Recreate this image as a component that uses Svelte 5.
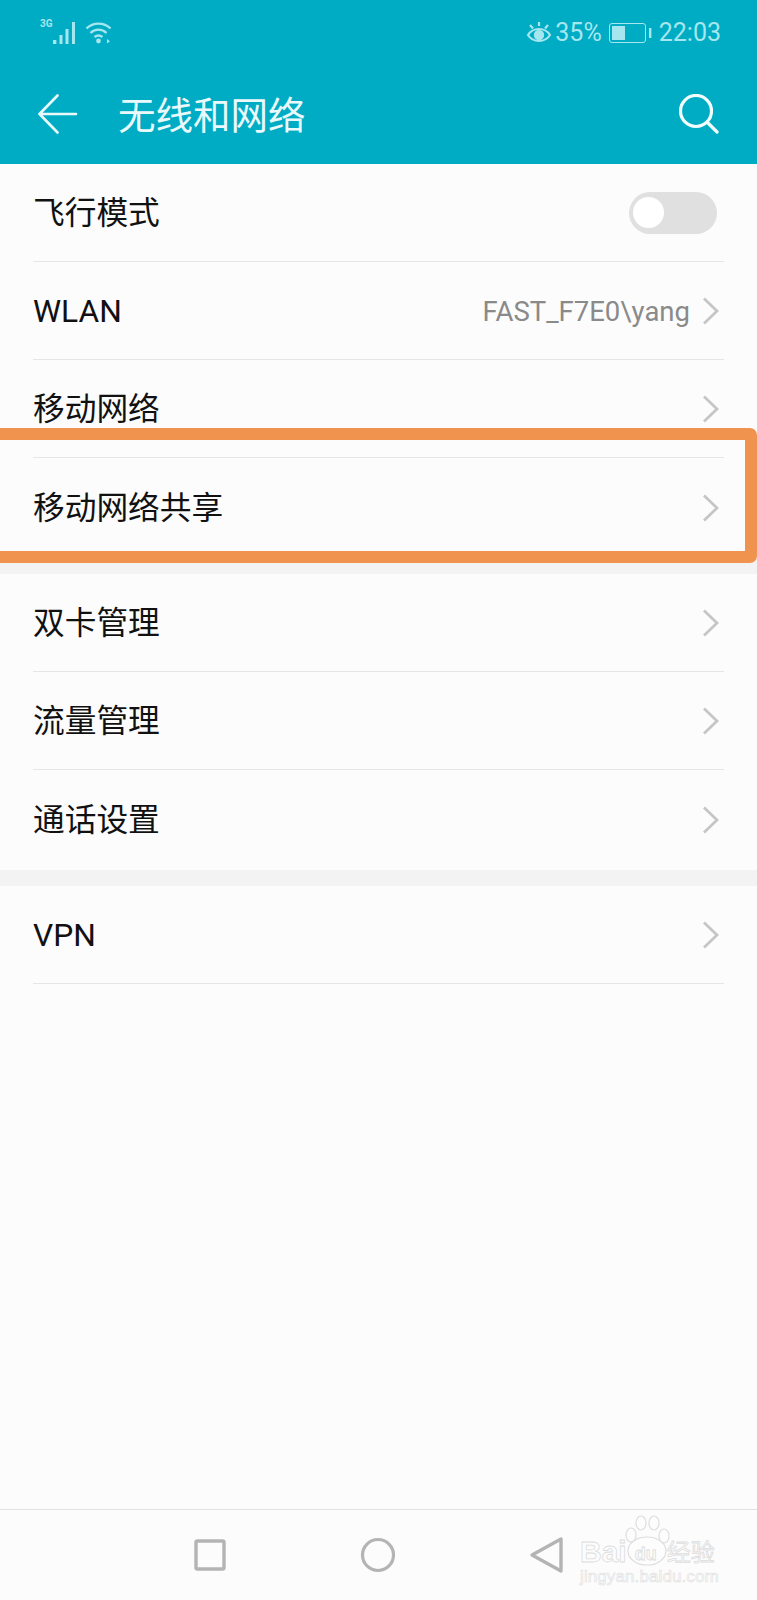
<script>
	const sections = [
		[
			{ label: '飞行模式', toggle: true },
			{ label: 'WLAN', value: 'FAST_F7E0\\yang' },
			{ label: '移动网络' },
			{ label: '移动网络共享' }
		],
		[{ label: '双卡管理' }, { label: '流量管理' }, { label: '通话设置' }],
		[{ label: 'VPN', single: true }]
	];
</script>

<div class="phone">
	<header>
		<div class="status">
			<div class="status-left">
				<span class="net">3G</span>
				<svg class="signal" width="26" height="24" viewBox="0 0 26 24" fill="#a6e6ef">
					<rect x="0" y="19" width="3.4" height="4" />
					<rect x="6.5" y="14" width="3" height="9" />
					<rect x="12.5" y="8" width="3" height="15" />
					<rect x="19" y="1" width="3" height="22" />
				</svg>
				<svg class="wifi" width="28" height="24" viewBox="0 0 28 24" fill="none" stroke="#a6e6ef" stroke-width="2.4">
					<path d="M1.5 7.5C8 1 19 1 25.5 7.5" />
					<path d="M5.5 12C10 7.5 17 7.5 21.5 12" />
					<path d="M9.5 16C12 14 15 14 17.5 16" />
					<circle cx="13.5" cy="20" r="2.4" fill="#a6e6ef" stroke="none" />
					<path d="M22 18v4.5l3-2.2z" fill="#a6e6ef" stroke="none" />
				</svg>
			</div>
			<div class="status-right">
				<svg class="eye" width="26" height="24" viewBox="0 0 26 24" fill="none" stroke="#a6e6ef" stroke-width="2.2">
					<path d="M2 14C7 6 19 6 24 14C19 22 7 22 2 14Z" />
					<circle cx="13" cy="14" r="5.2" fill="#a6e6ef" stroke="none" />
					<path d="M13 1v4M4 4l3 3.5M22 4l-3 3.5" />
				</svg>
				<span class="pct">35%</span>
				<svg class="battery" width="43" height="20" viewBox="0 0 43 20" fill="none">
					<rect x="0.5" y="0.5" width="36" height="19" rx="2.5" stroke="#a6e6ef" />
					<rect x="3" y="3" width="13" height="14" fill="#a6e6ef" />
					<rect x="40" y="5" width="2.4" height="10" fill="#a6e6ef" />
				</svg>
				<span class="time">22:03</span>
			</div>
		</div>
		<div class="toolbar">
			<svg class="back" width="40" height="40" viewBox="0 0 40 40" fill="none" stroke="#eafafc" stroke-width="2.6" stroke-linecap="round" stroke-linejoin="round">
				<path d="M38 20H2M19.5 1.5L1.5 20L19.5 38.5" />
			</svg>
			<h1>无线和网络</h1>
			<svg class="search" width="40" height="40" viewBox="0 0 40 40" fill="none" stroke="#f2fdfe" stroke-width="3.2" stroke-linecap="round">
				<circle cx="17" cy="17" r="15.5" />
				<path d="M28.5 28.5L38 38" />
			</svg>
		</div>
	</header>

	<main>
		{#each sections as rows}
			<section>
				{#each rows as row, i}
					<div class="row" class:last={i === rows.length - 1 && !row.single}>
						<span class="label">{row.label}</span>
						{#if row.toggle}
							<span class="toggle"><span class="knob"></span></span>
						{:else}
							{#if row.value}
								<span class="value">{row.value}</span>
							{/if}
							<svg class="chevron" width="17" height="28" viewBox="0 0 17 28" fill="none" stroke="#c6c6c6" stroke-width="2.8">
								<path d="M2 1.5L15 14L2 26.5" />
							</svg>
						{/if}
					</div>
				{/each}
			</section>
		{/each}
	</main>

	<nav>
		<svg width="34" height="34" viewBox="0 0 34 34" fill="none" stroke="#b4b4b4" stroke-width="3.4" stroke-linejoin="round">
			<rect x="3" y="3" width="28" height="28" rx="1.5" />
		</svg>
		<svg width="38" height="38" viewBox="0 0 38 38" fill="none" stroke="#b4b4b4" stroke-width="3.2">
			<circle cx="19" cy="19" r="15.5" />
		</svg>
		<svg width="36" height="38" viewBox="0 0 36 38" fill="none" stroke="#b4b4b4" stroke-width="3.4" stroke-linejoin="round">
			<path d="M32 3V35L3 19Z" />
		</svg>
	</nav>

	<div class="highlight"></div>

	<div class="watermark">
		<div class="wm-top">
			<span class="wm-bai">Bai</span>
			<span class="wm-paw">
				<svg width="50" height="52" viewBox="0 0 50 52" fill="#fdfdfd" stroke="#dedede" stroke-width="1.2">
					<ellipse cx="8" cy="20" rx="5" ry="7" />
					<ellipse cx="18" cy="8" rx="5" ry="7" />
					<ellipse cx="31" cy="8" rx="5" ry="7" />
					<ellipse cx="41" cy="21" rx="5" ry="7" />
					<ellipse cx="24" cy="36" rx="19" ry="14" />
				</svg>
				<span class="wm-du">du</span>
			</span>
			<span class="wm-cn">经验</span>
		</div>
		<div class="wm-url">jingyan.baidu.com</div>
	</div>
</div>

<style>
	:global(body) {
		margin: 0;
		background: #fcfcfc;
	}

	.phone {
		position: relative;
		width: 757px;
		height: 1600px;
		overflow: hidden;
		display: flex;
		flex-direction: column;
		background: #fcfcfc;
		font-family: Roboto, 'Noto Sans CJK SC', sans-serif;
	}

	header {
		height: 164px;
		flex: none;
		background: #00acc4;
		box-sizing: border-box;
	}

	.status {
		height: 64px;
		display: flex;
		justify-content: space-between;
		align-items: center;
		padding: 1px 36px 0 40px;
		color: #a6e6ef;
		box-sizing: border-box;
	}

	.status-left,
	.status-right {
		display: flex;
		align-items: center;
	}

	.net {
		align-self: flex-start;
		font-size: 10px;
		line-height: 12px;
		font-weight: 700;
		width: 13px;
		margin-top: -3px;
		white-space: nowrap;
	}

	.wifi {
		margin-left: 6px;
	}

	.pct,
	.time {
		font-size: 25px;
		line-height: 28px;
	}

	.pct {
		margin-left: 3px;
	}

	.battery {
		margin-left: 7px;
	}

	.time {
		margin-left: 7px;
	}

	.toolbar {
		height: 100px;
		display: flex;
		align-items: center;
		padding: 0 38px;
		box-sizing: border-box;
	}

	h1 {
		margin: -4px 0 0 40px;
		font-size: 37.5px;
		font-weight: 400;
		color: #eafafc;
		flex: 1;
		font-family: 'Noto Sans CJK SC', sans-serif;
	}

	main {
		flex: 1;
	}

	section + section {
		border-top: 16px solid #f3f3f3;
	}

	.row {
		height: 98px;
		margin: 0 33px;
		padding-right: 3px;
		box-sizing: border-box;
		display: flex;
		align-items: center;
		border-bottom: 1.5px solid #e6e6e6;
	}

	.row.last {
		height: 100px;
		border-bottom: none;
	}

	.label {
		flex: 1;
		font-size: 31.7px;
		line-height: 44px;
		margin-top: 2px;
		color: #111;
	}

	.value {
		font-size: 27.5px;
		color: #8a8a8a;
		margin: 2px 12px 0 0;
	}

	.chevron {
		margin-right: 2px;
	}

	.toggle {
		width: 88px;
		height: 42px;
		margin-right: 4px;
		border-radius: 21px;
		background: #e0e0e0;
		display: flex;
		align-items: center;
		padding-left: 4px;
		box-sizing: border-box;
	}

	.knob {
		width: 31px;
		height: 31px;
		border-radius: 50%;
		background: #fff;
	}

	nav {
		height: 91px;
		flex: none;
		border-top: 1.5px solid #e2e2e2;
		box-sizing: border-box;
		display: flex;
		align-items: center;
		padding: 0 0 0 193px;
		gap: 132px;
	}

	/* annotation drawn over the list */
	.highlight {
		position: absolute;
		left: -20px;
		right: 0;
		top: 428px;
		height: 135px;
		box-sizing: border-box;
		border: 12.5px solid #f0934e;
		border-radius: 7px;
	}

	.watermark {
		position: absolute;
		left: 580px;
		top: 1517px;
		width: 140px;
		color: transparent;
		-webkit-text-stroke: 0.8px #dcdcdc;
		font-family: 'Liberation Sans', sans-serif;
	}

	.wm-top {
		display: flex;
		align-items: flex-end;
		height: 50px;
	}

	.wm-bai {
		font-size: 30px;
		line-height: 30px;
		font-weight: 700;
	}

	.wm-paw {
		position: relative;
		display: block;
		width: 46px;
		height: 50px;
		margin-left: -2px;
		flex: none;
	}

	.wm-paw svg {
		position: absolute;
		left: -2px;
		top: -2px;
	}

	.wm-du {
		position: absolute;
		left: 10px;
		top: 27px;
		font-size: 18px;
		line-height: 20px;
		font-weight: 700;
	}

	.wm-cn {
		font-size: 24px;
		line-height: 32px;
		font-family: 'Noto Sans CJK SC', sans-serif;
		white-space: nowrap;
		margin-left: -4px;
	}

	.wm-url {
		font-size: 17px;
		line-height: 20px;
		letter-spacing: 0.1px;
		-webkit-text-stroke: 0.6px #e0e0e0;
		white-space: nowrap;
	}
</style>
